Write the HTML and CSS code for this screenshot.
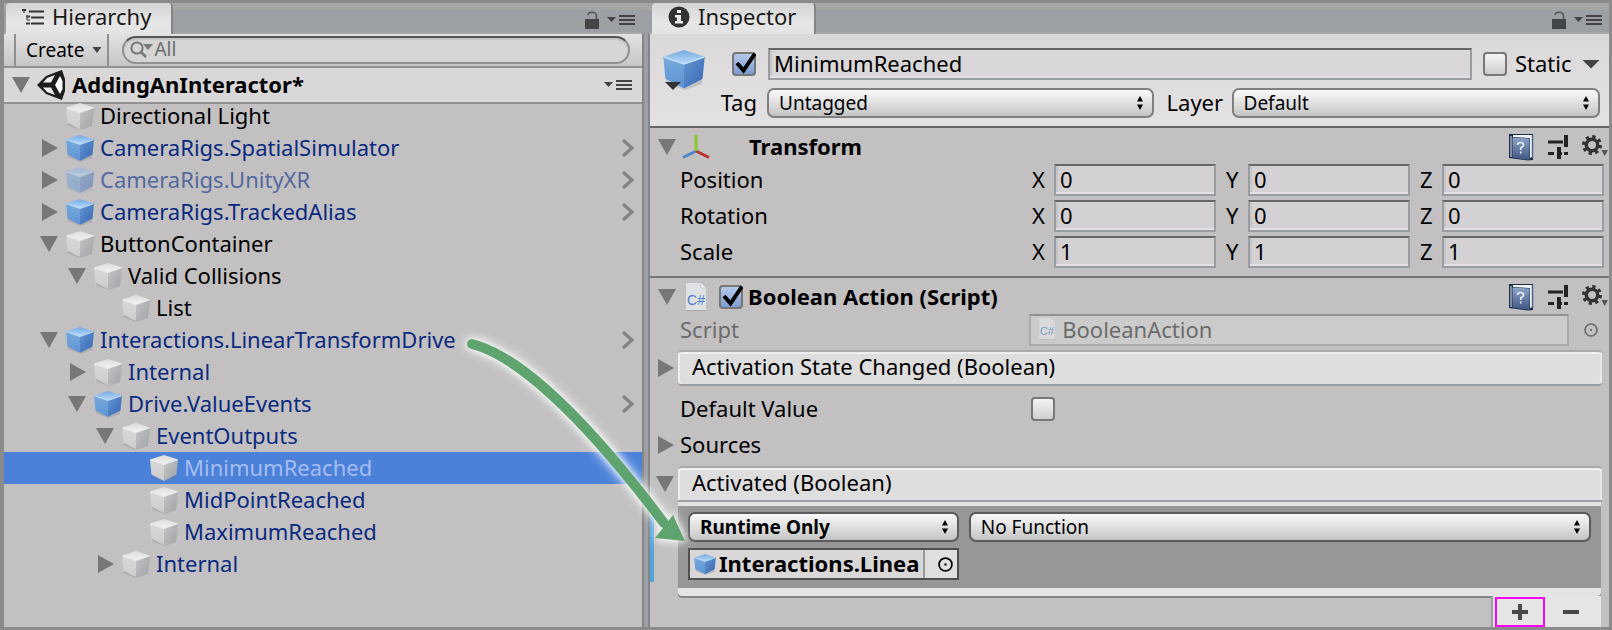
FILE: index.html
```html
<!DOCTYPE html>
<html lang="en">
<head>
<meta charset="utf-8">
<title>Hierarchy and Inspector</title>
<link rel="stylesheet" href="styles.css">
</head>
<body>
<svg class="defs" aria-hidden="true">
  <defs>
    <linearGradient id="bt" x1="0" y1="0" x2="0" y2="1"><stop offset="0" stop-color="#76a9e2"/><stop offset="1" stop-color="#b9ddf8"/></linearGradient>
    <linearGradient id="bl" x1="0" y1="0" x2="0" y2="1"><stop offset="0" stop-color="#79aade"/><stop offset="1" stop-color="#5d93d3"/></linearGradient>
    <linearGradient id="br" x1="0" y1="0" x2="1" y2="1"><stop offset="0" stop-color="#6797d3"/><stop offset="1" stop-color="#3565b1"/></linearGradient>
    <linearGradient id="gt" x1="0" y1="0" x2="0" y2="1"><stop offset="0" stop-color="#dcdcdc"/><stop offset="1" stop-color="#f2f2f2"/></linearGradient>
    <linearGradient id="gl" x1="0" y1="0" x2="0" y2="1"><stop offset="0" stop-color="#dadada"/><stop offset="1" stop-color="#cccccd"/></linearGradient>
    <linearGradient id="gr" x1="0" y1="0" x2="1" y2="1"><stop offset="0" stop-color="#c6c6c7"/><stop offset="1" stop-color="#9da1a5"/></linearGradient>
    <linearGradient id="bk" x1="0" y1="0" x2="0" y2="1"><stop offset="0" stop-color="#8ba4c9"/><stop offset="1" stop-color="#3f5682"/></linearGradient>
  </defs>
  <symbol id="cube-blue" viewBox="0 0 28 27">
    <path d="M2 20 14 26.500 26 20V23L14 27 2 22Z" fill="#777" opacity=".3"/>
    <path d="M14 0 28 4.500 14 9.500 0 4.500Z" fill="url(#bt)"/><path d="M0 4.500 14 9.500V26L1.500 19.500Z" fill="url(#bl)"/><path d="M28 4.500 14 9.500V26L26.500 19.500Z" fill="url(#br)"/>
    <path d="M.5 4.800 14 9.500 27.500 4.800" fill="none" stroke="#c9e6fb" stroke-width=".8"/>
  </symbol>
  <symbol id="cube-grey" viewBox="0 0 28 27">
    <path d="M2 20 14 26.500 26 20V23L14 27 2 22Z" fill="#777" opacity=".3"/>
    <path d="M14 0 28 4.500 14 9.500 0 4.500Z" fill="url(#gt)"/><path d="M0 4.500 14 9.500V26L1.500 19.500Z" fill="url(#gl)"/><path d="M28 4.500 14 9.500V26L26.500 19.500Z" fill="url(#gr)"/>
    <path d="M.5 4.800 14 9.500 27.500 4.800" fill="none" stroke="#f6f6f6" stroke-width=".8"/>
  </symbol>
  <symbol id="lock" viewBox="0 0 14 18"><path d="M0 8H14V18H0Z" fill="#444"/><path d="M3 4Q3 1.200 7 1.200 11.500 1.200 11.500 5V8" fill="none" stroke="#555" stroke-width="1.500"/></symbol>
  <symbol id="menu" viewBox="0 0 28 12"><path d="M0 3H9L4.500 8Z" fill="#444"/><path d="M12 2H28M12 6H28M12 10H28" stroke="#444" stroke-width="2"/></symbol>
  <symbol id="chevron" viewBox="0 0 12 18"><path d="M1 1 10 9 1 17" fill="none" stroke="#828282" stroke-width="3.200"/></symbol>
  <symbol id="updown" viewBox="0 0 6 14"><path d="M3 0 6 5.500H0ZM3 14 6 8.500H0Z"/></symbol>
  <symbol id="tick" viewBox="0 0 24 24"><path d="M5 11 11.500 18.500 23 1.500" fill="none" stroke="#000" stroke-width="4"/></symbol>
  <symbol id="target" viewBox="0 0 14 14"><circle cx="7" cy="7" r="6" fill="none" stroke="currentColor" stroke-width="1.600"/><rect x="6" y="6" width="2" height="2" fill="currentColor"/></symbol>
  <symbol id="page" viewBox="0 0 20 28"><path d="M0 0H15L20 5V28H0Z" fill="#dfe2e5"/><path d="M15 0 20 5H15Z" fill="#f5f5f5" stroke="#b5b5b5" stroke-width=".6"/><path d="M0 27.500H20" stroke="#aaa"/></symbol>
  <symbol id="book" viewBox="0 0 26 28"><path d="M1 1H25V27L20 27.500 1 25Z" fill="#1c2c4c"/><path d="M5 2H24V24L22 25V5L5 4Z" fill="#f2f5f9"/><path d="M4.500 4.500 21.500 5.500V27L4.500 24.500Z" fill="url(#bk)"/><path d="M24.500 2V25" stroke="#496494" stroke-width="1.500"/><path d="M3 3V24" stroke="#e8edf5"/><path d="M9.500 12Q9.500 9.500 12.500 9.500 15.500 9.500 15.500 12 15.500 13.500 12.700 15V17M12.700 18.500V20.500" fill="none" stroke="#e8eef8" stroke-width="1.600"/></symbol>
  <symbol id="sliders" viewBox="0 0 20 24"><path d="M0 7H15M0 18.500H6M9 18.500H14M16 18.500H20" stroke="#222" stroke-width="3"/><path d="M18 0V12M11 12V24" stroke="#222" stroke-width="4"/></symbol>
  <symbol id="gear" viewBox="0 0 26 24"><circle cx="10" cy="10" r="8" fill="none" stroke="#333" stroke-width="4" stroke-dasharray="3.140 3.140"/><circle cx="10" cy="10" r="5.700" fill="none" stroke="#333" stroke-width="3.400"/><path d="M19.500 15H26L22.700 21Z" fill="#555"/></symbol>
</svg>

<main class="editor">
  <section class="panel hierarchy" aria-label="Hierarchy">
    <header class="tabbar">
      <h1 class="tab">
        <svg class="i-list" viewBox="0 0 22 16"><path d="M0 1H4M4 7.500H8M4 14.500H8M7 2.500H22M9 8.500H22M9 14.500H22" stroke="#333" stroke-width="2"/><path d="M2 2V4M5 6V11M5 11H8" stroke="#666" stroke-width="1.500"/></svg>
        Hierarchy</h1>
      <span class="tab-tools"><button aria-label="Lock"><svg class="i-lock"><use href="#lock"/></svg></button><button aria-label="Panel menu"><svg class="i-menu"><use href="#menu"/></svg></button></span>
    </header>
    <div class="toolbar">
      <button class="create">Create <i class="caret"></i></button>
      <div class="search">
        <svg viewBox="0 0 24 18"><circle cx="7" cy="7" r="5.600" fill="none" stroke="#777" stroke-width="2"/><path d="M11 11 16 16" stroke="#777" stroke-width="2.500"/><path d="M13 3H23L18 9Z" fill="#777"/></svg>
        <input type="text" placeholder="All" aria-label="Search hierarchy">
      </div>
    </div>
    <div class="scene">
      <button class="fold open" aria-label="Collapse scene"></button>
      <svg class="i-unity" viewBox="0 0 28 30"><path d="M0 15 9 6 22 1 25 0 28 9V21L25 30 9 24Z" fill="#1c1c1c"/><path d="M6 12.500 10 8 18 5 14 12.500Z" fill="#eee"/><path d="M6 17.500H14L18 25 10 22Z" fill="#eee"/><path d="M18 15 23 6 25.500 11V19L23 24Z" fill="#fff"/></svg>
      <h2>AddingAnInteractor*</h2>
      <button class="scene-menu" aria-label="Scene menu"><svg class="i-menu"><use href="#menu"/></svg></button>
    </div>
    <ul class="tree">
      <li class="row"><i class="fold"></i><svg class="cube"><use href="#cube-grey"/></svg><span>Directional Light</span></li>
      <li class="row prefab"><button class="fold closed" aria-label="Expand"></button><svg class="cube"><use href="#cube-blue"/></svg><span>CameraRigs.SpatialSimulator</span><svg class="chevron"><use href="#chevron"/></svg></li>
      <li class="row prefab inactive"><button class="fold closed" aria-label="Expand"></button><svg class="cube"><use href="#cube-blue"/></svg><span>CameraRigs.UnityXR</span><svg class="chevron"><use href="#chevron"/></svg></li>
      <li class="row prefab"><button class="fold closed" aria-label="Expand"></button><svg class="cube"><use href="#cube-blue"/></svg><span>CameraRigs.TrackedAlias</span><svg class="chevron"><use href="#chevron"/></svg></li>
      <li class="row"><button class="fold open" aria-label="Collapse"></button><svg class="cube"><use href="#cube-grey"/></svg><span>ButtonContainer</span></li>
      <li class="row d1"><button class="fold open" aria-label="Collapse"></button><svg class="cube"><use href="#cube-grey"/></svg><span>Valid Collisions</span></li>
      <li class="row d2"><i class="fold"></i><svg class="cube"><use href="#cube-grey"/></svg><span>List</span></li>
      <li class="row prefab"><button class="fold open" aria-label="Collapse"></button><svg class="cube"><use href="#cube-blue"/></svg><span>Interactions.LinearTransformDrive</span><svg class="chevron"><use href="#chevron"/></svg></li>
      <li class="row prefab d1"><button class="fold closed" aria-label="Expand"></button><svg class="cube"><use href="#cube-grey"/></svg><span>Internal</span></li>
      <li class="row prefab d1"><button class="fold open" aria-label="Collapse"></button><svg class="cube"><use href="#cube-blue"/></svg><span>Drive.ValueEvents</span><svg class="chevron"><use href="#chevron"/></svg></li>
      <li class="row prefab d2"><button class="fold open" aria-label="Collapse"></button><svg class="cube"><use href="#cube-grey"/></svg><span>EventOutputs</span></li>
      <li class="row prefab d3 selected"><i class="fold"></i><svg class="cube"><use href="#cube-grey"/></svg><span>MinimumReached</span></li>
      <li class="row prefab d3"><i class="fold"></i><svg class="cube"><use href="#cube-grey"/></svg><span>MidPointReached</span></li>
      <li class="row prefab d3"><i class="fold"></i><svg class="cube"><use href="#cube-grey"/></svg><span>MaximumReached</span></li>
      <li class="row prefab d2"><button class="fold closed" aria-label="Expand"></button><svg class="cube"><use href="#cube-grey"/></svg><span>Internal</span></li>
    </ul>
  </section>

  <section class="panel inspector" aria-label="Inspector">
    <header class="tabbar">
      <h1 class="tab">
        <svg class="i-info" viewBox="0 0 22 22"><circle cx="11" cy="11" r="10.500" fill="#333"/><path d="M9 4H13V7H9ZM7 9H13V15H15V17.500H7V15H9V11.500H7Z" fill="#eee"/></svg>
        Inspector</h1>
      <span class="tab-tools"><button aria-label="Lock"><svg class="i-lock"><use href="#lock"/></svg></button><button aria-label="Panel menu"><svg class="i-menu"><use href="#menu"/></svg></button></span>
    </header>

    <div class="object-head">
      <div class="object-icon"><svg class="big-cube"><use href="#cube-blue"/></svg><i class="caret dark"></i></div>
      <div class="object-fields">
        <div class="line">
          <span class="check"><input type="checkbox" checked aria-label="Active"><svg><use href="#tick"/></svg></span>
          <input class="field name" type="text" value="MinimumReached" aria-label="Name">
          <span class="check"><input type="checkbox" id="static"></span>
          <label for="static" class="static">Static</label>
          <button class="caret wide" aria-label="Static options"></button>
        </div>
        <div class="line">
          <label for="tag" class="tag">Tag</label>
          <span class="select"><select id="tag"><option>Untagged</option></select><svg><use href="#updown"/></svg></span>
          <label for="layer" class="layer">Layer</label>
          <span class="select layer-select"><select id="layer"><option>Default</option></select><svg><use href="#updown"/></svg></span>
        </div>
      </div>
    </div>

    <section class="component">
      <header class="comp-head">
        <button class="fold open" aria-label="Collapse Transform"></button>
        <svg class="i-axes" viewBox="0 0 28 24"><path d="M14 16 1 22.500" stroke="#4a86c8" stroke-width="2.800"/><path d="M14 16 27 22.500" stroke="#b8302c" stroke-width="2.800"/><path d="M14 16V0" stroke="#8fc63d" stroke-width="3.400"/></svg>
        <span class="no-check"></span>
        <h2>Transform</h2>
        <span class="comp-tools"><button aria-label="Help"><svg class="i-book"><use href="#book"/></svg></button><button aria-label="Presets"><svg class="i-sliders"><use href="#sliders"/></svg></button><button aria-label="Settings"><svg class="i-gear"><use href="#gear"/></svg></button></span>
      </header>
      <div class="vectors">
        <div class="vector"><span class="vlabel">Position</span><label><b>X</b><input class="field" value="0"></label><label><b>Y</b><input class="field" value="0"></label><label><b>Z</b><input class="field" value="0"></label></div>
        <div class="vector"><span class="vlabel">Rotation</span><label><b>X</b><input class="field" value="0"></label><label><b>Y</b><input class="field" value="0"></label><label><b>Z</b><input class="field" value="0"></label></div>
        <div class="vector"><span class="vlabel">Scale</span><label><b>X</b><input class="field" value="1"></label><label><b>Y</b><input class="field" value="1"></label><label><b>Z</b><input class="field" value="1"></label></div>
      </div>
    </section>

    <section class="component">
      <header class="comp-head">
        <button class="fold open" aria-label="Collapse Boolean Action"></button>
        <svg class="i-script" viewBox="0 0 20 28"><use href="#page"/><text x="10" y="22" text-anchor="middle" class="cs">C#</text></svg>
        <span class="check"><input type="checkbox" checked aria-label="Enable Boolean Action"><svg><use href="#tick"/></svg></span>
        <h2>Boolean Action (Script)</h2>
        <span class="comp-tools"><button aria-label="Help"><svg class="i-book"><use href="#book"/></svg></button><button aria-label="Presets"><svg class="i-sliders"><use href="#sliders"/></svg></button><button aria-label="Settings"><svg class="i-gear"><use href="#gear"/></svg></button></span>
      </header>
      <div class="script-row">
        <span class="vlabel">Script</span>
        <span class="field script-field"><svg class="i-script-small" viewBox="0 0 20 28"><use href="#page"/><text x="10" y="22" text-anchor="middle" class="cs">C#</text></svg>BooleanAction</span>
        <button class="pick" aria-label="Pick script" disabled><svg><use href="#target"/></svg></button>
      </div>
      <div class="event-row"><button class="fold closed" aria-label="Expand"></button><div class="event-title round">Activation State Changed (Boolean)</div></div>
      <div class="default-row"><label class="vlabel" for="default">Default Value</label><span class="check"><input type="checkbox" id="default"></span></div>
      <div class="sources-row"><button class="fold closed" aria-label="Expand"></button><span class="vlabel">Sources</span></div>
      <div class="event-row activated"><button class="fold open" aria-label="Collapse"></button><div class="event-title">Activated (Boolean)</div></div>
      <div class="listener-wrap">
        <div class="listener">
          <span class="select strong"><select aria-label="Call state"><option>Runtime Only</option></select><svg><use href="#updown"/></svg></span>
          <span class="select"><select aria-label="Function"><option>No Function</option></select><svg><use href="#updown"/></svg></span>
          <div class="object-field"><div class="object-value"><svg><use href="#cube-blue"/></svg><span>Interactions.Linea</span></div><button aria-label="Pick object"><svg><use href="#target"/></svg></button></div>
        </div>
        <div class="footer">
          <button class="add" aria-label="Add"><svg viewBox="0 0 16 16"><path d="M8 0V16M0 8H16" stroke="#484848" stroke-width="4"/></svg></button>
          <button class="remove" aria-label="Remove"><svg viewBox="0 0 16 16"><path d="M0 8H16" stroke="#484848" stroke-width="4"/></svg></button>
        </div>
      </div>
    </section>
  </section>

  <svg class="callout" viewBox="0 0 250 230" aria-hidden="true"><path d="M22 24C77 38 150 118 214 203" fill="none" stroke="#5fa36f" stroke-width="10" stroke-linecap="round"/><path d="M235 221 223 195 205 218Z" fill="#5fa36f"/></svg>
</main>
</body>
</html>
```
FILE: styles.css
```css
* { box-sizing: border-box; }
body { margin: 0; font: 22px/32px "Noto Sans", "Open Sans", sans-serif; color: #000; background: #8b8b8b; }
h1, h2, ul { margin: 0; padding: 0; font-size: inherit; }
ul { list-style: none; }
button { padding: 0; border: 0; background: none; font: inherit; color: inherit; display: block; flex: none; }
input, select { font: inherit; color: inherit; margin: 0; min-width: 0; }
svg { display: block; flex: none; }
.defs { position: absolute; width: 0; height: 0; }
.cs { font: 14px "Liberation Sans", sans-serif; fill: #4f7fcb; }

.editor { position: relative; display: grid; grid-template-columns: 638fr 959fr; gap: 8px; min-height: 100vh; border: solid #8b8b8b; border-width: 3px 3px 3px 4px; overflow: hidden; background: linear-gradient(#a5a5a5 7px, #9ca0a4 7px); }
.panel { display: flex; flex-direction: column; min-width: 0; }

/* Tabs */
.tabbar { display: flex; justify-content: space-between; align-items: flex-end; height: 31px; padding: 0 7px 0 2px; border-bottom: 2px solid #a8a8a8; }
.tab { display: flex; align-items: center; gap: 8px; height: 31px; margin-bottom: -2px; padding: 0 18px 4px 16px; border-right: 2px solid #858585; border-radius: 4px 4px 0 0; background: linear-gradient(#d4d4d4, #e6e6e6 60%, #e4e4e4); color: #1a1a1a; font-weight: 400; line-height: 27px; }
.hierarchy .tab { padding-right: 20px; }
.i-list { width: 22px; height: 16px; }
.i-info { width: 22px; height: 22px; }
.tab-tools { display: flex; align-items: center; gap: 8px; height: 24px; }
.i-lock { width: 14px; height: 18px; }
.i-menu { width: 28px; height: 12px; }

/* Hierarchy */
.hierarchy { background: linear-gradient(transparent 31px, #c2c0c1 31px); box-shadow: 2px 31px #858585; }
.toolbar { display: flex; height: 34px; padding: 2px 12px 0 10px; border-bottom: 2px solid #929292; background: linear-gradient(#e2e2e2, #c6c6c6); }
.create { display: flex; align-items: center; gap: 8px; margin-top: -2px; padding: 0 6px 0 10px; border: solid #909090; border-width: 0 2px; font-size: 19px; line-height: 30px; }
.caret { width: 9px; height: 6px; background: #444; clip-path: polygon(0 0, 100% 0, 50% 100%); }
.search { display: flex; align-items: center; flex: 1; height: 28px; margin-left: 13px; padding-left: 6px; border: 2px solid #909090; border-top-color: #555; border-radius: 14px; background: #d5d5d5; box-shadow: inset 0 2px 1px #c2c2c2; }
.search svg { width: 24px; height: 18px; }
.search input { flex: 1; height: 24px; padding: 0 0 2px; border: 0; background: none; font-size: 19px; outline: 0; }
.search input::placeholder { color: #6d6d6d; opacity: 1; }
.scene { display: flex; align-items: center; height: 36px; padding: 0 10px 0 8px; border-bottom: 2px solid #929292; background: #d9d7d8; }
.scene h2 { line-height: 30px; padding-bottom: 2px; }
.scene .i-unity { width: 28px; height: 30px; margin: 0 7px; }
.scene-menu { margin-left: auto; }
.fold { width: 18px; height: 18px; flex: none; }
.fold.open { height: 16px; background: #777; clip-path: polygon(0 0, 100% 0, 50% 100%); }
.fold.closed { background: #777; clip-path: polygon(2px 0, 100% 50%, 2px 100%); }
.tree { margin-top: -4px; }
.row { display: flex; align-items: center; height: 32px; padding: 0 8px 0 36px; white-space: nowrap; }
.row > span, .vlabel { line-height: 30px; padding-bottom: 2px; }
.row.d1 { padding-left: 64px; }
.row.d2 { padding-left: 92px; }
.row.d3 { padding-left: 120px; }
.cube { width: 28px; height: 27px; margin: 0 6px 0 8px; }
.chevron { width: 12px; height: 18px; margin-left: auto; }
.prefab { color: #0a2a80; }
.inactive > span { color: #53699f; }
.inactive .cube { opacity: .5; }
.selected { background: #4b81d9; color: #a5bdf5; }

/* Inspector */
.inspector { background: linear-gradient(transparent 31px, #c2c0c1 31px); box-shadow: -2px 31px #858585; }
.object-head { display: flex; height: 94px; padding: 14px 9px 0 13px; border-bottom: 2px solid #666; background: linear-gradient(#dad8d9, #e3e1e2); }
.object-icon { position: relative; width: 42px; padding-top: 2px; }
.big-cube { width: 42px; height: 40px; }
.caret.dark { position: absolute; left: 2px; top: 34px; width: 16px; height: 8px; background: #333; }
.object-fields { flex: 1; min-width: 0; display: flex; flex-direction: column; gap: 7px; }
.line { display: flex; align-items: center; height: 32px; }
.check { position: relative; width: 24px; height: 24px; flex: none; }
.check input { display: block; appearance: none; width: 24px; height: 24px; border: 2px solid #777; border-radius: 4px; background: linear-gradient(#f4f4f4, #cfcfcf); }
.check input:checked { background: linear-gradient(#b3c9e8, #7d9dd2); }
.check svg { position: absolute; inset: 0; width: 24px; height: 24px; overflow: visible; pointer-events: none; }
.object-fields .check:first-child { margin-left: 27px; margin-right: 12px; }
.field { height: 32px; padding: 0 4px 2px; border: 2px solid #999da1; border-top-color: #666; border-radius: 0; background: #d3d1d3; box-shadow: inset 0 -2px #e2e0e2, inset 2px 0 #c6c6c8; line-height: 26px; }
.field.name { flex: 1; margin-right: 11px; background: #d9d7d8; }
.static { flex: none; width: 75px; padding-left: 8px; line-height: 30px; padding-bottom: 2px; }
.caret.wide { width: 18px; height: 9px; background: #444; }
.tag { flex: none; width: 62px; text-align: right; padding-right: 10px; }
.layer { flex: none; width: 78px; padding-left: 13px; }
.tag, .layer { line-height: 30px; padding-bottom: 2px; }
.select { position: relative; flex: 386; height: 30px; min-width: 0; }
.layer-select { flex: 368; }
.select select { display: block; appearance: none; width: 100%; height: 30px; padding: 0 24px 0 10px; border: 2px solid #808080; border-radius: 7px; background: linear-gradient(#fafafa, #e2e2e2 45%, #c4c4c4); font-size: 19px; line-height: 26px; }
.select svg { position: absolute; right: 11px; top: 8px; width: 6px; height: 14px; pointer-events: none; }
.component { border-bottom: 2px solid #777; }
.component:last-child { border-bottom: 0; flex: 1; display: flex; flex-direction: column; }
.comp-head { display: flex; align-items: center; height: 36px; padding: 2px 1px 0 8px; }
.comp-head h2 { margin-left: 5px; line-height: 30px; padding-bottom: 2px; }
.i-axes { width: 28px; height: 24px; margin: 0 0 0 6px; }
.no-check { width: 34px; }
.i-script { width: 20px; height: 28px; margin: 0 13px 0 10px; }
.comp-tools { display: flex; align-items: center; gap: 14px; margin-left: auto; }
.i-book { width: 26px; height: 28px; }
.i-sliders { width: 20px; height: 24px; }
.i-gear { width: 26px; height: 24px; }
.vectors { display: grid; gap: 4px; padding: 0 5px 8px 30px; }
.vector { display: grid; grid-template-columns: calc(38% - 9px) 1fr 1fr 1fr; column-gap: 10px; }
.vector label { display: flex; line-height: 30px; }
.vector b { width: 22px; font-weight: 400; }
.vector .field { flex: 1; width: 0; }
.script-row { display: flex; height: 32px; padding: 0 10px 0 30px; color: #6b6b6b; }
.script-row .vlabel { width: 38%; }
.script-field { flex: 1; display: flex; align-items: center; gap: 7px; padding-left: 8px; background: #cbcbcb; border-color: #aaa; border-top-color: #929292; box-shadow: none; }
.i-script-small { width: 16px; height: 22px; opacity: .65; }
.pick { width: 15px; margin-left: 15px; }
.pick svg { width: 14px; height: 14px; color: #6b6b6b; }
.event-row { display: flex; align-items: center; height: 36px; margin-top: 4px; padding: 0 7px 0 6px; }
.event-title { flex: 1; height: 36px; margin-left: 4px; padding-left: 14px; border-top: 2px solid #aaa; border-bottom: 2px solid #9b9fa4; background: #dedede; box-shadow: inset 0 2px #efefef, inset 2px 0 #efefef, inset -2px 0 #e8e8e8; line-height: 29px; border-radius: 4px 4px 0 0; }
.event-title.round { border-radius: 4px; }
.default-row { display: flex; align-items: center; height: 36px; margin-top: 5px; padding: 0 5px 0 30px; }
.default-row .vlabel { width: 38%; }
.sources-row { display: flex; align-items: center; gap: 6px; height: 36px; padding-left: 6px; }
.activated { margin-top: 3px; }
.listener-wrap { flex: 1; display: flex; flex-direction: column; padding: 0 8px 0 28px; background: linear-gradient(#55a5dd, #55a5dd) 0 14px / 4px 66px no-repeat; }
.listener { display: grid; grid-template-columns: 271fr 623fr; gap: 6px 10px; padding: 6px 10px 8px; border-top: 4px solid #e4e4e4; border-bottom: 8px solid #e4e4e4; border-radius: 0 0 4px 4px; box-shadow: 0 2px #858585; background: #979797; }
.listener .select select { border-color: #5b5b5b; }
.strong select { font-weight: 700; }
.object-field { display: flex; height: 32px; border: 2px solid #505050; background: #e0e0e0; }
.object-value { display: flex; align-items: center; gap: 3px; flex: 1; min-width: 0; padding-left: 4px; border-right: 2px solid #999; background: #d9d7d8; font-weight: 700; line-height: 26px; }
.object-value svg { width: 22px; height: 21px; }
.object-value span { padding-bottom: 2px; white-space: nowrap; }
.object-field button { width: 32px; padding: 0 0 0 13px; }
.object-field button svg { width: 15px; height: 15px; }
.footer { display: flex; align-items: flex-end; align-self: flex-end; flex: 1; width: 110px; min-height: 31px; border-left: 2px solid #9ca0a4; background: #e5e5e5; }
.footer svg { width: 16px; height: 16px; }
.add { display: grid; place-items: center; width: 50px; margin-left: 2px; height: 30px; border: 2px solid #f0f; }
.remove { display: grid; place-items: center; width: 52px; height: 30px; }

/* Arrow laid over both panels */
.callout { position: absolute; left: 446px; top: 317px; width: 250px; height: 230px; overflow: visible; pointer-events: none; filter: drop-shadow(0 0 3px #fff) drop-shadow(0 0 6px rgba(255, 255, 255, .8)); }
```
